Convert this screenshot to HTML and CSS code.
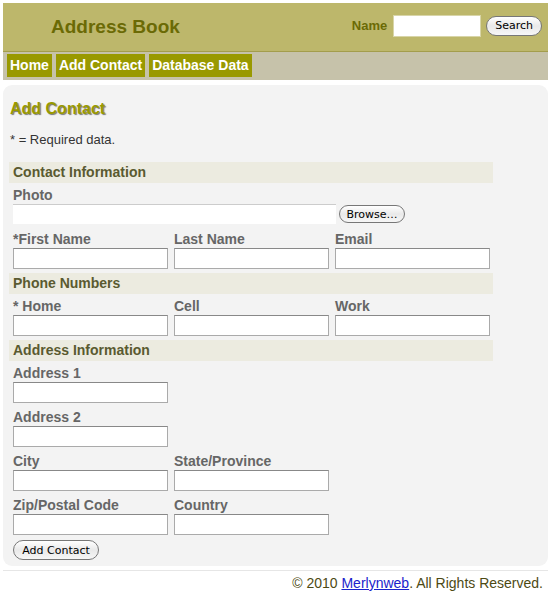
FILE: index.html
```html
<!DOCTYPE html>
<html lang="en">

<head>
    <meta charset="UTF-8">
    <title>Address Book</title>
    <link rel="stylesheet" href="styles.css">
</head>

<body>
    <div class="page">
        <div class="header">
            <h1 class="logo">Address Book</h1>
            <form class="search">
                <label>Name</label>
                <input type="text" class="search_text">
                <button type="button" class="btn">Search</button>
            </form>
        </div>
        <ul class="nav">
            <li><a href="javascript:;">Home</a></li>
            <li><a href="javascript:;">Add Contact</a></li>
            <li><a href="javascript:;">Database Data</a></li>
        </ul>
        <div class="content">
            <h2 class="title">Add Contact</h2>
            <p class="note">* = Required data.</p>

            <div class="bar">Contact Information</div>
            <div class="row first">
                <div class="field">
                    <label>Photo</label>
                    <div class="file">
                        <span class="file_box"></span>
                        <button type="button" class="btn">Browse…</button>
                    </div>
                </div>
            </div>
            <div class="row">
                <div class="field"><label>*First Name</label><input type="text"></div>
                <div class="field"><label>Last Name</label><input type="text"></div>
                <div class="field"><label>Email</label><input type="text"></div>
            </div>

            <div class="bar">Phone Numbers</div>
            <div class="row first">
                <div class="field"><label>* Home</label><input type="text"></div>
                <div class="field"><label>Cell</label><input type="text"></div>
                <div class="field"><label>Work</label><input type="text"></div>
            </div>

            <div class="bar">Address Information</div>
            <div class="row first">
                <div class="field"><label>Address 1</label><input type="text"></div>
            </div>
            <div class="row">
                <div class="field"><label>Address 2</label><input type="text"></div>
            </div>
            <div class="row">
                <div class="field"><label>City</label><input type="text"></div>
                <div class="field"><label>State/Province</label><input type="text"></div>
            </div>
            <div class="row">
                <div class="field"><label>Zip/Postal Code</label><input type="text"></div>
                <div class="field"><label>Country</label><input type="text"></div>
            </div>
            <button type="button" class="btn submit">Add Contact</button>
        </div>
        <div class="footer">
            © 2010 <a href="javascript:;">Merlynweb</a>. All Rights Reserved.
        </div>
    </div>
</body>

</html>
```

FILE: styles.css
```css
* {
    padding: 0;
    margin: 0;
    list-style: none;
    box-sizing: border-box;
}

body {
    font-family: "Liberation Sans", Arial, sans-serif;
    font-size: 13px;
    color: #333;
    background-color: #fff;
}

.page {
    padding: 3px 3px 0 3px;
}

/* 顶部标题栏 */
.header {
    height: 48px;
    background-color: #bdb76b;
    display: flex;
    align-items: center;
    justify-content: space-between;
    padding: 0 6px 0 48px;
}

.logo {
    font-size: 19px;
    color: #6b6a05;
    font-weight: bold;
    margin-top: -1px;
}

.search {
    display: flex;
    align-items: center;
    margin-top: -3px;
}

.search label {
    font-size: 13px;
    font-weight: bold;
    color: #6b6a05;
    margin-right: 6px;
}

.search_text {
    width: 88px;
    height: 22px;
    border: 1px solid #d8d5a8;
    background-color: #fff;
    margin-right: 5px;
}

.btn {
    font-family: "DejaVu Sans", "Liberation Sans", sans-serif;
    font-size: 11px;
    color: #000;
    height: 20px;
    padding: 0 8px;
    border: 1px solid #777;
    border-radius: 10px;
    background: linear-gradient(#ffffff, #e9e9e9 50%, #f6f6f6);
}

/* 导航 */
.nav {
    height: 29px;
    border-top: 1px solid #a39d4c;
    background-color: #c6c2aa;
    display: flex;
    align-items: center;
    padding-left: 4px;
    padding-bottom: 1px;
}

.nav li {
    margin-right: 4px;
}

.nav a {
    display: block;
    height: 23px;
    line-height: 23px;
    padding: 0 3px;
    background-color: #999900;
    color: #fff;
    font-weight: bold;
    font-size: 14px;
    text-decoration: none;
}

/* 内容区 */
.content {
    margin-top: 5px;
    background-color: #f3f3f3;
    border-radius: 9px;
    padding: 14px 6px 6px 6px;
}

.title {
    font-size: 16px;
    color: #999900;
    text-shadow: 1px 1px 1px #777;
    line-height: 20px;
    margin-left: 1px;
}

.note {
    font-size: 13px;
    color: #333;
    margin-top: 12px;
    line-height: 17px;
    margin-left: 1px;
}

.bar {
    width: 484px;
    height: 21px;
    line-height: 21px;
    margin-top: 4px;
    padding-left: 4px;
    background-color: #ecebe0;
    color: #5a5a30;
    font-weight: bold;
    font-size: 14px;
}

.note + .bar {
    margin-top: 14px;
}

.row {
    display: flex;
    gap: 6px;
    padding-left: 4px;
    margin-top: 6px;
}

.row.first {
    margin-top: 4px;
}

.field label {
    display: block;
    height: 17px;
    line-height: 17px;
    font-size: 14px;
    font-weight: bold;
    color: #666;
}

.field input {
    display: block;
    width: 155px;
    height: 21px;
    border: 1px solid #aaa;
    border-top-color: #888;
    background-color: #fff;
}

.file {
    display: flex;
    align-items: flex-start;
    gap: 3px;
    height: 21px;
}

.file_box {
    display: block;
    width: 323px;
    height: 20px;
    background-color: #fff;
    border-top: 1px solid #ccc;
}

.file .btn {
    width: 66px;
    height: 18px;
    margin-top: 1px;
    padding: 0;
}

.submit {
    margin: 5px 0 0 4px;
    width: 86px;
    padding: 0;
}

/* 底部 */
.footer {
    border-top: 1px solid #e6e6e6;
    margin-top: 4px;
    padding: 4px 5px 0 0;
    text-align: right;
    font-size: 14px;
    color: #4d4a14;
    line-height: 17px;
}

.footer a {
    color: #1a23cc;
}
```
